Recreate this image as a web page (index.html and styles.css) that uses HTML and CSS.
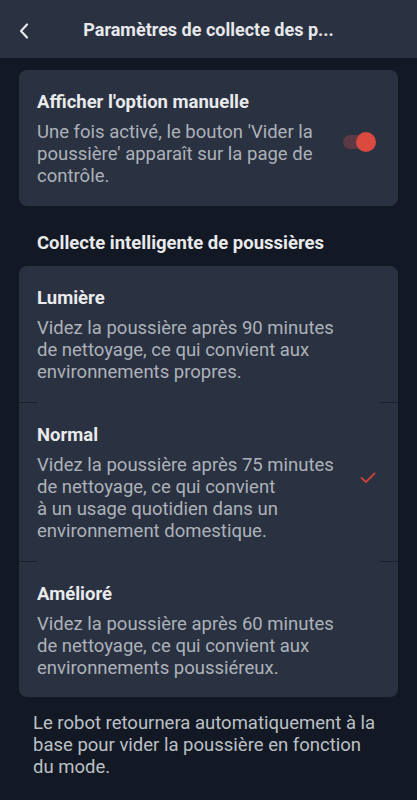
FILE: index.html
```html
<!DOCTYPE html>
<html lang="fr">
<head>
  <meta charset="UTF-8" />
  <meta name="viewport" content="width=device-width, initial-scale=1.0"/>
  <title>Paramètres de collecte des poussières</title>
  <link rel="stylesheet" href="styles.css">
</head>
<body>

  <header class="top-bar">
    <button class="back-btn" aria-label="Retour">
      <svg width="12" height="16" viewBox="0 0 12 16">
        <path d="M9 1.5 L3 8 L9 14.5" fill="none" stroke="#e6e8eb" stroke-width="2.2" stroke-linecap="round" stroke-linejoin="round"/>
      </svg>
    </button>
    <h1 class="page-title">Paramètres de collecte des p...</h1>
  </header>

  <main class="content">
    <section class="card">
      <div class="option-row">
        <div class="option-text">
          <div class="item-title">Afficher l'option manuelle</div>
          <div class="item-desc">Une fois activé, le bouton 'Vider la poussière' apparaît sur la page de contrôle.</div>
        </div>
        <div class="switch on"><span class="knob"></span></div>
      </div>
    </section>

    <h2 class="section-title">Collecte intelligente de poussières</h2>

    <section class="card">
      <div class="mode-item">
        <div class="option-text">
          <div class="item-title">Lumière</div>
          <div class="item-desc">Videz la poussière après 90 minutes<br>de nettoyage, ce qui convient aux<br>environnements propres.</div>
        </div>
      </div>
      <div class="divider"></div>
      <div class="mode-item selected">
        <div class="option-text">
          <div class="item-title">Normal</div>
          <div class="item-desc">Videz la poussière après 75 minutes<br>de nettoyage, ce qui convient<br>à un usage quotidien dans un<br>environnement domestique.</div>
        </div>
        <svg class="check" width="16" height="12" viewBox="0 0 16 12">
          <path d="M1.5 6 L6 10 L14.5 1.5" fill="none" stroke="#c9403d" stroke-width="1.8" stroke-linecap="round" stroke-linejoin="round"/>
        </svg>
      </div>
      <div class="divider"></div>
      <div class="mode-item">
        <div class="option-text">
          <div class="item-title">Amélioré</div>
          <div class="item-desc">Videz la poussière après 60 minutes<br>de nettoyage, ce qui convient aux<br>environnements poussiéreux.</div>
        </div>
      </div>
    </section>

    <p class="footnote">Le robot retournera automatiquement à la base pour vider la poussière en fonction du mode.</p>
  </main>

</body>
</html>
```

FILE: styles.css
```css
body {
  font-family: Roboto, "Noto Sans", Arial, sans-serif;
  margin: 0;
  padding: 0;
  background-color: #131924;
  color: #e9eaec;
}

.top-bar {
  background-color: #2a3140;
  height: 58px;
  display: flex;
  align-items: center;
  justify-content: center;
  position: relative;
}

.back-btn {
  position: absolute;
  left: 14px;
  top: 21px;
  background: none;
  border: none;
  padding: 0;
  width: 20px;
  height: 20px;
  display: flex;
  align-items: center;
  justify-content: center;
}

.page-title {
  margin: 2px 0 0;
  font-size: 18px;
  font-weight: bold;
  color: #e6e8eb;
  white-space: nowrap;
  line-height: 24px;
}

.content {
  padding: 12px 19px 20px;
}

.card {
  background-color: #2a3140;
  border-radius: 8px;
}

.option-row {
  display: flex;
  align-items: center;
  padding: 21px 18px 19px;
}

.option-text {
  flex: 1;
}

.item-title {
  font-size: 18.5px;
  font-weight: bold;
  line-height: 22px;
  color: #e9eaec;
}

.item-desc {
  margin-top: 8px;
  font-size: 18.5px;
  line-height: 22px;
  color: #adb2ba;
  max-width: 300px;
}

.switch {
  width: 27px;
  height: 14px;
  border-radius: 7px;
  background-color: #5b3a45;
  position: relative;
  margin-right: 10px;
  margin-top: 6px;
}

.switch .knob {
  position: absolute;
  right: -6px;
  top: -3px;
  width: 20px;
  height: 20px;
  border-radius: 50%;
  background-color: #db4a41;
}

.section-title {
  margin: 26px 0 12px 18px;
  font-size: 18.5px;
  font-weight: bold;
  line-height: 22px;
  color: #e9eaec;
}

.mode-item {
  display: flex;
  align-items: center;
  padding: 21px 18px 19px;
}

.mode-item:last-child {
  padding-bottom: 18px;
}

.mode-item .item-desc {
  max-width: 320px;
}

.check {
  margin-right: 4px;
  margin-bottom: 10px;
}

.divider {
  height: 1px;
  background: linear-gradient(to right, #1a202b 0, #1a202b 18px, transparent 18px, transparent calc(100% - 18px), #1a202b calc(100% - 18px));
}

.footnote {
  margin: 15px 0 0 14px;
  font-size: 18.5px;
  line-height: 22px;
  color: #bcc0c6;
  padding-right: 20px;
}
```
